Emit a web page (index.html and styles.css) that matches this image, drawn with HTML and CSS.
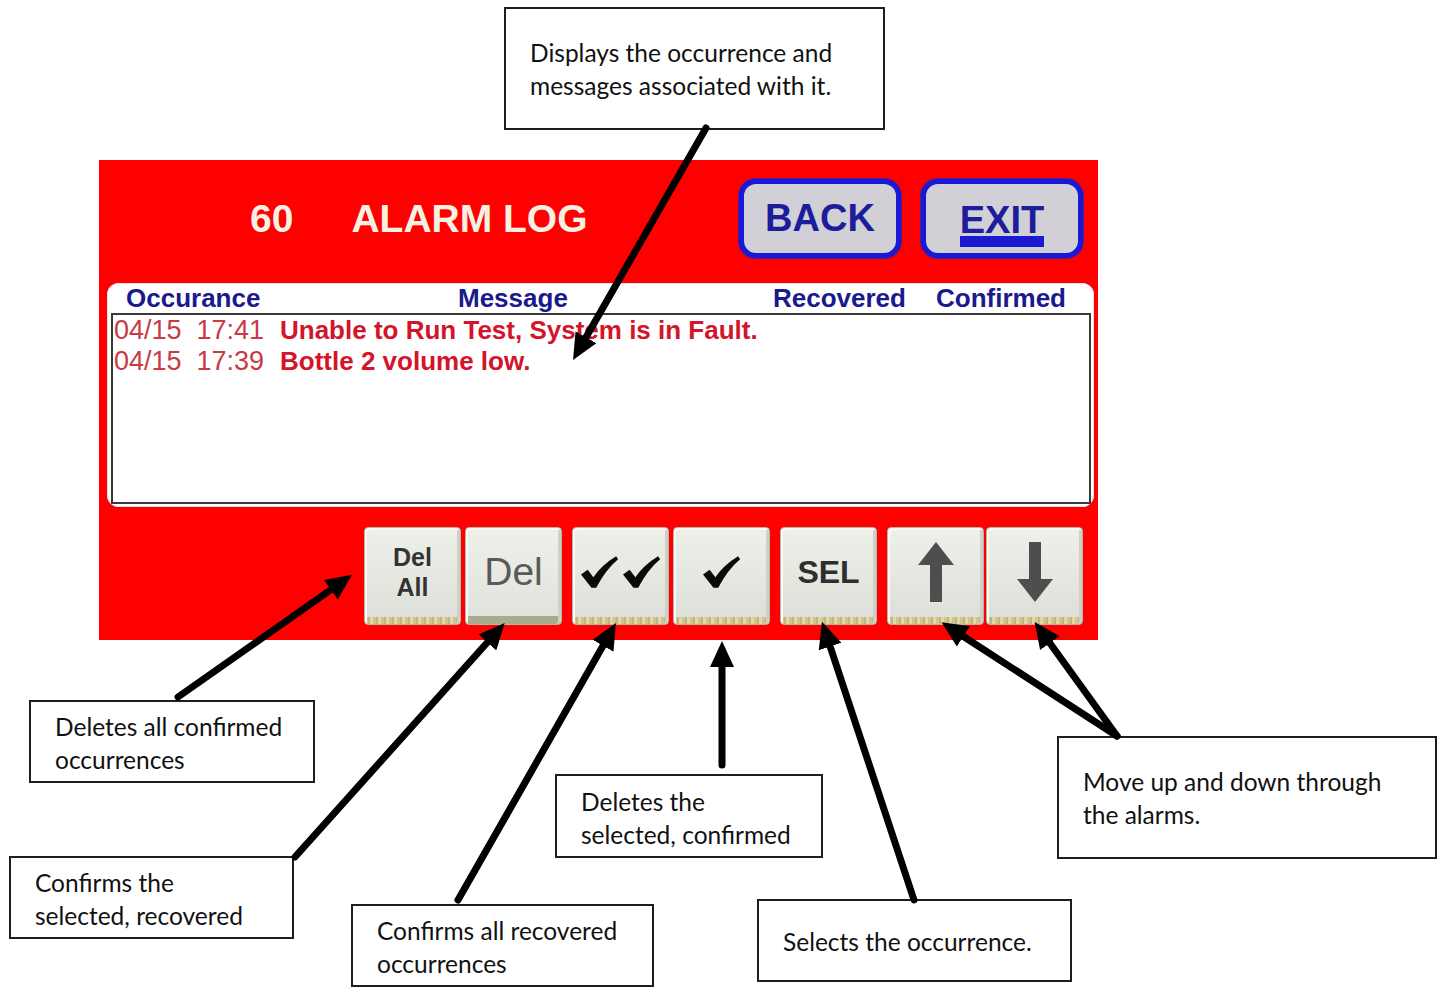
FILE: index.html
```html
<!DOCTYPE html>
<html lang="en">
<head>
<meta charset="UTF-8">
<title>Alarm Log Screen</title>
<link rel="stylesheet" href="styles.css">
</head>
<body>

<div class="sheet">

  <div class="note note-display">Displays the occurrence and<br>messages associated with it.</div>

  <div class="panel">
    <div class="panel-head">
      <div class="title"><span>60</span><span>ALARM LOG</span></div>
      <div class="nav">
        <div class="nav-btn">BACK</div>
        <div class="nav-btn exit"><span>EXIT</span></div>
      </div>
    </div>

    <div class="log">
      <div class="log-head">
        <span>Occurance</span>
        <span>Message</span>
        <span>Recovered</span>
        <span>Confirmed</span>
      </div>
      <div class="log-body">
        <div class="log-row"><span class="when">04/15&nbsp; 17:41</span><span class="msg">Unable to Run Test, System is in Fault.</span></div>
        <div class="log-row"><span class="when">04/15&nbsp; 17:39</span><span class="msg">Bottle 2 volume low.</span></div>
      </div>
    </div>

    <div class="keys">
      <div class="key-group">
        <div class="key key-small">Del<br>All</div>
        <div class="key key-big pressed">Del</div>
      </div>
      <div class="key-group">
        <div class="key">
          <svg class="check" viewBox="0 0 40 34"><path d="M0 19 L7 14 L13 22 Q22 9 37 0 L39 3 Q26 14 16 33 L11 33 Z"/></svg>
          <svg class="check" viewBox="0 0 40 34"><path d="M0 19 L7 14 L13 22 Q22 9 37 0 L39 3 Q26 14 16 33 L11 33 Z"/></svg>
        </div>
        <div class="key">
          <svg class="check" viewBox="0 0 40 34"><path d="M0 19 L7 14 L13 22 Q22 9 37 0 L39 3 Q26 14 16 33 L11 33 Z"/></svg>
        </div>
      </div>
      <div class="key-group">
        <div class="key key-sel">SEL</div>
      </div>
      <div class="key-group tight">
        <div class="key">
          <svg class="arrow-glyph" viewBox="0 0 36 60"><path d="M18 0 L36 23 L24 23 L24 60 L12 60 L12 23 L0 23 Z"/></svg>
        </div>
        <div class="key">
          <svg class="arrow-glyph" viewBox="0 0 36 60"><path d="M12 0 L24 0 L24 37 L36 37 L18 60 L0 37 L12 37 Z"/></svg>
        </div>
      </div>
    </div>
  </div>

  <div class="note note-delall">Deletes all confirmed<br>occurrences</div>
  <div class="note note-del">Confirms the<br>selected, recovered</div>
  <div class="note note-checkall">Confirms all recovered<br>occurrences</div>
  <div class="note note-check">Deletes the<br>selected, confirmed</div>
  <div class="note note-sel">Selects the occurrence.</div>
  <div class="note note-move">Move up and down through<br>the alarms.</div>

  <!-- pointer lines from the notes to the screen -->
  <svg class="arrows" width="1442" height="988" viewBox="0 0 1442 988">
    <defs>
      <marker id="head" viewBox="0 0 26 24" refX="10" refY="12" markerWidth="26" markerHeight="24" markerUnits="userSpaceOnUse" orient="auto">
        <path d="M0 0 L26 12 L0 24 Z"/>
      </marker>
    </defs>
    <line x1="706" y1="128" x2="581" y2="346"/>
    <line x1="178" y1="697" x2="339" y2="584"/>
    <line x1="295" y1="857" x2="494" y2="635"/>
    <line x1="458" y1="900" x2="608" y2="637"/>
    <line x1="722" y1="765" x2="722" y2="657"/>
    <line x1="914" y1="900" x2="827" y2="637"/>
    <line x1="1117" y1="736" x2="955" y2="631"/>
    <line x1="1117" y1="736" x2="1044" y2="635"/>
  </svg>

</div>

</body>
</html>
```

FILE: styles.css
```css
body {
  margin: 0;
  background: #fff;
}

.sheet {
  position: relative;
  width: 1442px;
  height: 988px;
  overflow: hidden;
}

/* ---- callout notes ---- */

.note {
  position: absolute;
  box-sizing: border-box;
  border: 2px solid #1e1e1e;
  background: #fff;
  padding: 8px 0 0 24px;
  font-family: Lato, "Noto Sans", sans-serif;
  font-size: 24.5px;
  line-height: 33px;
  color: #111;
}

.note-display  { left: 504px;  top: 7px;   width: 381px; height: 123px; padding-top: 27px; }
.note-delall   { left: 29px;   top: 700px; width: 286px; height: 83px; }
.note-del      { left: 9px;    top: 856px; width: 285px; height: 83px; }
.note-checkall { left: 351px;  top: 904px; width: 303px; height: 83px; }
.note-check    { left: 555px;  top: 774px; width: 268px; height: 84px; padding-top: 9px; }
.note-sel      { left: 757px;  top: 899px; width: 315px; height: 83px; padding-top: 24px; }
.note-move     { left: 1057px; top: 736px; width: 380px; height: 123px; padding-top: 27px; }

.arrows {
  position: absolute;
  left: 0;
  top: 0;
  pointer-events: none;
}

.arrows line {
  stroke: #000;
  stroke-width: 7;
  stroke-linecap: round;
  marker-end: url(#head);
}

/* ---- the HMI screen ---- */

.panel {
  position: absolute;
  left: 99px;
  top: 160px;
  width: 999px;
  height: 480px;
  background: #fe0000;
  font-family: "Liberation Sans", Arial, sans-serif;
}

.panel-head {
  display: flex;
  justify-content: space-between;
  height: 98px;
  padding: 19px 15px 0 151px;
  margin-bottom: 25px;
  box-sizing: border-box;
}

.title {
  display: flex;
  gap: 58px;
  align-self: center;
  font-size: 39px;
  font-weight: bold;
  color: #f6f1e2;
}

.nav {
  display: flex;
  gap: 20px;
}

.nav-btn {
  display: flex;
  align-items: center;
  justify-content: center;
  width: 162px;
  height: 79px;
  box-sizing: border-box;
  border: 5px solid #1818d6;
  border-radius: 17px;
  background: #d0d0d6;
  box-shadow: 0 0 0 1px #5a1a8a;
  font-size: 38px;
  font-weight: bold;
  color: #1c1c9c;
}

.nav-btn.exit {
  align-items: flex-start;
  padding-top: 20px;
}

.nav-btn.exit span {
  display: block;
  line-height: 32px;
  border-bottom: 11px solid #1a1ad2;
}

.log {
  height: 224px;
  margin: 0 4px 0 8px;
  padding: 0 3px 3px 4px;
  box-sizing: border-box;
  background: #fff;
  border-radius: 12px;
  box-shadow: inset 0 0 0 1px #e4e4e4;
}

.log-head {
  display: grid;
  grid-template-columns: 332px 315px 163px auto;
  height: 30px;
  padding-left: 15px;
  font-size: 26px;
  font-weight: bold;
  line-height: 30px;
  color: #1a1a8c;
}

.log-body {
  height: 191px;
  box-sizing: border-box;
  border: 2px solid #3a3a3a;
  padding-left: 1px;
}

.log-row {
  display: grid;
  grid-template-columns: 166px auto;
  line-height: 31px;
  white-space: nowrap;
}

.when {
  font-size: 27px;
  color: #c83a46;
}

.msg {
  font-size: 26px;
  font-weight: bold;
  color: #d4142a;
}

.keys {
  display: flex;
  justify-content: flex-end;
  gap: 10px;
  margin-top: 20px;
  padding-right: 15px;
}

.key-group {
  display: flex;
  gap: 4px;
}

.key-group.tight {
  gap: 2px;
}

.key {
  display: flex;
  align-items: center;
  justify-content: center;
  gap: 4px;
  width: 97px;
  height: 98px;
  box-sizing: border-box;
  padding-bottom: 8px;
  border: 1px solid #b4b6ac;
  border-radius: 4px;
  background:
    repeating-linear-gradient(90deg, #d8c48a 0 3px, #aebb8e 3px 5px, #e6d6a4 5px 8px) bottom / 100% 7px no-repeat,
    linear-gradient(#eef0ea, #dcdfd7);
  box-shadow: inset 2px 2px 0 #f9f9f5, inset -3px 0 0 #cfd1c9;
  font-weight: bold;
  color: #333;
  text-align: center;
}

.key.pressed {
  background:
    linear-gradient(#a9ab8e, #a9ab8e) bottom / 100% 8px no-repeat,
    linear-gradient(#eef0ea, #dfe2da);
}

.key-small {
  font-size: 25px;
  line-height: 30px;
}

.key-big {
  font-size: 39px;
  font-weight: normal;
  color: #5a5a5a;
}

.key-sel {
  font-size: 32px;
  color: #2e2e2e;
}

.check {
  width: 38px;
  height: 33px;
  fill: #0a0a0a;
}

.arrow-glyph {
  width: 36px;
  height: 60px;
  fill: #4e4e4e;
}
```
